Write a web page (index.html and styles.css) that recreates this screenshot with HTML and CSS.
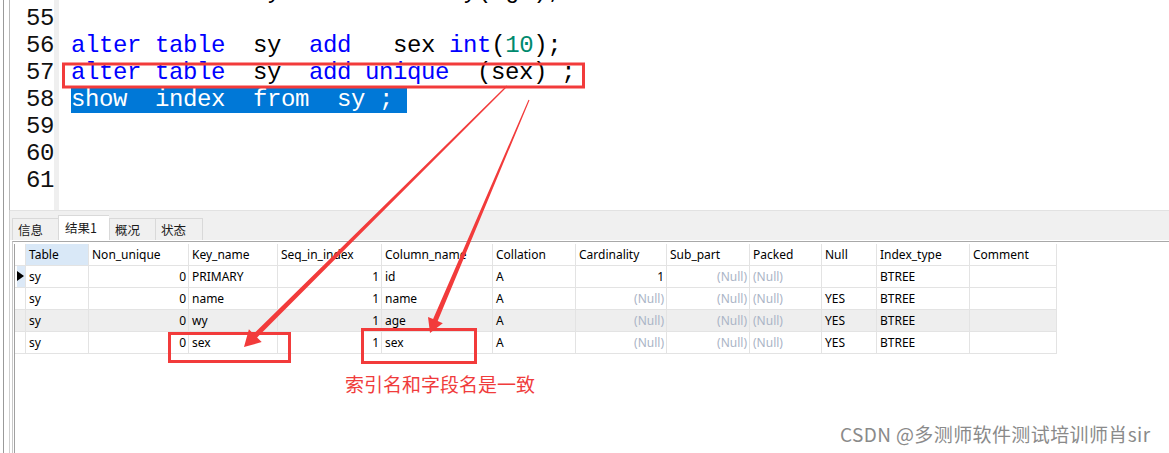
FILE: index.html
```html
<!DOCTYPE html>
<html lang="zh-CN">
<head>
<meta charset="utf-8">
<title>show index</title>
<link rel="stylesheet" href="styles.css">
</head>
<body>
<div class="app">
  <div class="side"></div>
  <div class="main">
    <div class="editor">
      <div class="gutter">
        <div class="ln">54</div>
        <div class="ln">55</div>
        <div class="ln">56</div>
        <div class="ln">57</div>
        <div class="ln">58</div>
        <div class="ln">59</div>
        <div class="ln">60</div>
        <div class="ln">61</div>
      </div>
      <div class="fold"></div>
      <div class="code">
        <div class="line"><span class="kw">alter</span> <span class="kw">table</span>  sy  <span class="kw">add</span> <span class="kw">index</span> wy(age);</div>
        <div class="line"></div>
        <div class="line"><span class="kw">alter</span> <span class="kw">table</span>  sy  <span class="kw">add</span>   sex <span class="kw">int</span>(<span class="num">10</span>);</div>
        <div class="line"><span class="kw">alter</span> <span class="kw">table</span>  sy  <span class="kw">add</span> <span class="kw">unique</span>  (sex) ;</div>
        <div class="line"><span class="sel">show  index  from  sy ; </span></div>
        <div class="line"></div>
        <div class="line"></div>
        <div class="line"></div>
      </div>
    </div>
    <div class="results">
      <div class="tabs">
        <div class="tab">信息</div>
        <div class="tab active">结果1</div>
        <div class="tab">概况</div>
        <div class="tab">状态</div>
      </div>
      <div class="grid-wrap">
        <div class="grid">
          <div class="row head">
            <div class="c ind"></div>
            <div class="c selcol">Table</div>
            <div class="c">Non_unique</div>
            <div class="c">Key_name</div>
            <div class="c">Seq_in_index</div>
            <div class="c">Column_name</div>
            <div class="c">Collation</div>
            <div class="c">Cardinality</div>
            <div class="c">Sub_part</div>
            <div class="c">Packed</div>
            <div class="c">Null</div>
            <div class="c">Index_type</div>
            <div class="c">Comment</div>
          </div>
          <div class="row">
            <div class="c ind cur"><span class="tri"></span></div>
            <div class="c">sy</div>
            <div class="c r">0</div>
            <div class="c">PRIMARY</div>
            <div class="c r">1</div>
            <div class="c">id</div>
            <div class="c">A</div>
            <div class="c r">1</div>
            <div class="c r null">(Null)</div>
            <div class="c null">(Null)</div>
            <div class="c"></div>
            <div class="c">BTREE</div>
            <div class="c"></div>
          </div>
          <div class="row">
            <div class="c ind"></div>
            <div class="c">sy</div>
            <div class="c r">0</div>
            <div class="c">name</div>
            <div class="c r">1</div>
            <div class="c">name</div>
            <div class="c">A</div>
            <div class="c r null">(Null)</div>
            <div class="c r null">(Null)</div>
            <div class="c null">(Null)</div>
            <div class="c">YES</div>
            <div class="c">BTREE</div>
            <div class="c"></div>
          </div>
          <div class="row alt">
            <div class="c ind"></div>
            <div class="c">sy</div>
            <div class="c r">0</div>
            <div class="c">wy</div>
            <div class="c r">1</div>
            <div class="c">age</div>
            <div class="c">A</div>
            <div class="c r null">(Null)</div>
            <div class="c r null">(Null)</div>
            <div class="c null">(Null)</div>
            <div class="c">YES</div>
            <div class="c">BTREE</div>
            <div class="c"></div>
          </div>
          <div class="row">
            <div class="c ind"></div>
            <div class="c">sy</div>
            <div class="c r">0</div>
            <div class="c">sex</div>
            <div class="c r">1</div>
            <div class="c">sex</div>
            <div class="c">A</div>
            <div class="c r null">(Null)</div>
            <div class="c r null">(Null)</div>
            <div class="c null">(Null)</div>
            <div class="c">YES</div>
            <div class="c">BTREE</div>
            <div class="c"></div>
          </div>
        </div>
      </div>
    </div>
  </div>
</div>

<svg class="annot" width="1169" height="453" viewBox="0 0 1169 453" xmlns="http://www.w3.org/2000/svg">
  <g fill="none" stroke="#f23b3b" stroke-width="3">
    <rect x="63.5" y="64" width="520" height="23"/>
    <rect x="169.5" y="333.5" width="120" height="28"/>
    <rect x="362.5" y="329.5" width="113" height="33"/>
  </g>
  <g fill="#f23b3b">
    <polygon points="507.4,86.4 257.1,337.5 261.7,342.1 244,347 248.9,329.3 253.5,333.9 506.6,85.6"/>
    <polygon points="529.5,100.2 437.7,321.1 442.8,323.2 430,333 428.0,317.0 433.1,319.1 528.5,99.8"/>
  </g>
</svg>
<div class="note">索引名和字段名是一致</div>
<div class="watermark">CSDN @多测师软件测试培训师肖sir</div>
</body>
</html>
```
FILE: styles.css
```css
html, body {
  margin: 0;
  padding: 0;
}
body {
  width: 1169px;
  height: 453px;
  overflow: hidden;
  position: relative;
  background: #ffffff;
  font-family: "Noto Sans", "Noto Sans CJK SC", sans-serif;
}
.app {
  display: flex;
  height: 453px;
}
.side {
  width: 10px;
  flex: none;
  box-sizing: border-box;
  border-right: 1px solid #b9b9b9;
  background: linear-gradient(to right, #ffffff 0, #ffffff 3px, #9a9a9a 3px, #9a9a9a 4px, #ffffff 4px);
}
.main {
  flex: 1;
  display: flex;
  flex-direction: column;
  min-width: 0;
}
.editor {
  height: 210px;
  flex: none;
  display: flex;
  overflow: hidden;
  background: #ffffff;
}
.gutter {
  width: 44px;
  flex: none;
  margin-top: -22px;
  font-family: "Liberation Mono", monospace;
  font-size: 24px;
  line-height: 27px;
  letter-spacing: -0.4px;
  text-align: right;
  color: #111111;
}
.ln {
  height: 27px;
}
.fold {
  width: 5px;
  flex: none;
  background: #efefef;
}
.code {
  flex: 1;
  padding-left: 12px;
  margin-top: -22px;
  font-family: "Liberation Mono", monospace;
  font-size: 24px;
  line-height: 27px;
  letter-spacing: -0.4px;
  color: #000000;
}
.line {
  height: 27px;
  white-space: pre;
}
.kw {
  color: #0000ff;
}
.num {
  color: #008a6e;
}
.sel {
  background: #0078d7;
  color: #ffffff;
}
.results {
  flex: 1;
  display: flex;
  flex-direction: column;
  border-left: 1px solid #d0d0d0;
  margin-left: -1px;
}
.tabs {
  height: 30px;
  flex: none;
  box-sizing: border-box;
  display: flex;
  align-items: flex-end;
  padding-left: 2px;
  background: #f0f0f0;
  border-top: 1px solid #e2e2e2;
}
.tab {
  height: 22px;
  box-sizing: border-box;
  padding: 0 5px;
  width: 46px;
  border: 1px solid #d9d9d9;
  border-bottom: none;
  border-right: none;
  font-family: "Noto Sans CJK SC", sans-serif;
  font-size: 12.5px;
  line-height: 21px;
  color: #1a1a1a;
  background: #f0f0f0;
}
.tab:last-child {
  border-right: 1px solid #d9d9d9;
  width: 48px;
}
.tab.active {
  height: 25px;
  width: 51px;
  line-height: 23px;
  background: #ffffff;
  padding-left: 6px;
}
.grid-wrap {
  flex: 1;
  margin-left: 2px;
  border-left: 1px solid #c8c8c8;
  border-top: 1px solid #a8a8a8;
  margin-top: 1px;
  padding-top: 2px;
  padding-left: 1px;
  background: #ffffff;
}
.grid {
  border-left: 1px solid #a0a0a0;
  height: 100%;
}
.row {
  display: grid;
  grid-template-columns: 11px 63px 100px 89px 104px 111px 83px 91px 83px 72px 55px 93px 87px;
  height: 22px;
}
.c {
  box-sizing: border-box;
  height: 22px;
  border-right: 1px solid #e3e3e3;
  border-bottom: 1px solid #e3e3e3;
  padding: 0 3px;
  font-size: 12px;
  line-height: 21px;
  color: #000000;
  white-space: nowrap;
  overflow: hidden;
}
.c.r {
  text-align: right;
  padding-right: 2px;
}
.c.null {
  color: #aab4c6;
}
.c.ind {
  padding: 0;
  position: relative;
}
.head .c {
  background: #ffffff;
}
.head .c.selcol {
  background: #d9e8f7;
}
.row.alt .c {
  background: #eeeeee;
}
.c.ind.cur {
  background: linear-gradient(to right, #ffffff 0, #ffffff 2px, #dce9f7 2px);
}
.tri {
  position: absolute;
  left: 2px;
  top: 5px;
  width: 0;
  height: 0;
  border-left: 7px solid #000000;
  border-top: 5.5px solid transparent;
  border-bottom: 5.5px solid transparent;
}
.annot {
  position: absolute;
  left: 0;
  top: 0;
  pointer-events: none;
}
.note {
  position: absolute;
  left: 345px;
  top: 371px;
  font-family: "Noto Sans CJK SC", sans-serif;
  font-size: 19px;
  line-height: 26px;
  color: #f03c3c;
}
.watermark {
  position: absolute;
  left: 840px;
  top: 421px;
  font-family: "Noto Sans CJK SC", sans-serif;
  font-size: 19px;
  line-height: 26px;
  letter-spacing: 0.4px;
  color: #8a8a8a;
  text-shadow: 0 0 1px #ffffff;
}
```
